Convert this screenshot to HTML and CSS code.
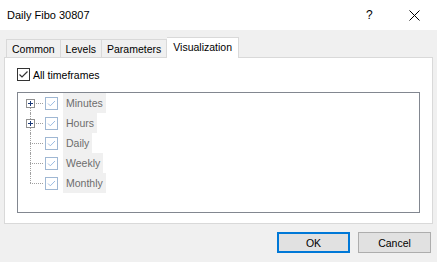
FILE: index.html
```html
<!DOCTYPE html>
<html lang="en">
  <head>
    <meta charset="UTF-8" />
    <meta name="viewport" content="width=device-width, initial-scale=1.0" />
    <title>Daily Fibo 30807</title>
    <link rel="stylesheet" href="styles.css">
  </head>
  <body>
    <div class="dialog">
      <div class="titlebar">
        <span class="title">Daily Fibo 30807</span>
        <span class="help">?</span>
        <span class="close">
          <svg width="11" height="11" viewBox="0 0 11 11"><path d="M0.5 0.5 L10.5 10.5 M10.5 0.5 L0.5 10.5" stroke="#000" stroke-width="1" fill="none"/></svg>
        </span>
      </div>

      <div class="content">
        <div class="tabs">
          <div class="tab">Common</div>
          <div class="tab">Levels</div>
          <div class="tab">Parameters</div>
          <div class="tab active">Visualization</div>
        </div>

        <div class="panel">
          <label class="check">
            <span class="box">
              <svg width="11" height="11" viewBox="0 0 11 11"><path d="M1.5 5.5 L4 8 L9.5 2.5" stroke="#333" stroke-width="1.2" fill="none"/></svg>
            </span>
            All timeframes
          </label>

          <div class="tree">
            <div class="node first">
              <span class="twig"><span class="plus"></span></span>
              <span class="cb"><svg width="11" height="11" viewBox="0 0 11 11"><path d="M2 5.5 L4.3 7.8 L9 3" stroke="#9dbde3" stroke-width="1" fill="none"/></svg></span>
              <span class="label">Minutes</span>
            </div>
            <div class="node">
              <span class="twig"><span class="plus"></span></span>
              <span class="cb"><svg width="11" height="11" viewBox="0 0 11 11"><path d="M2 5.5 L4.3 7.8 L9 3" stroke="#9dbde3" stroke-width="1" fill="none"/></svg></span>
              <span class="label">Hours</span>
            </div>
            <div class="node">
              <span class="twig"></span>
              <span class="cb"><svg width="11" height="11" viewBox="0 0 11 11"><path d="M2 5.5 L4.3 7.8 L9 3" stroke="#9dbde3" stroke-width="1" fill="none"/></svg></span>
              <span class="label">Daily</span>
            </div>
            <div class="node">
              <span class="twig"></span>
              <span class="cb"><svg width="11" height="11" viewBox="0 0 11 11"><path d="M2 5.5 L4.3 7.8 L9 3" stroke="#9dbde3" stroke-width="1" fill="none"/></svg></span>
              <span class="label">Weekly</span>
            </div>
            <div class="node last">
              <span class="twig"></span>
              <span class="cb"><svg width="11" height="11" viewBox="0 0 11 11"><path d="M2 5.5 L4.3 7.8 L9 3" stroke="#9dbde3" stroke-width="1" fill="none"/></svg></span>
              <span class="label">Monthly</span>
            </div>
          </div>
        </div>

        <div class="buttons">
          <button class="btn default">OK</button>
          <button class="btn">Cancel</button>
        </div>
      </div>
    </div>
  </body>
</html>
```

FILE: styles.css
```css
html,
body {
  margin: 0;
  padding: 0;
}
body {
  width: 437px;
  height: 262px;
  overflow: hidden;
  font-family: "Liberation Sans", Arial, sans-serif;
  font-size: 10.5px;
  color: #000;
}
.dialog {
  display: flex;
  flex-direction: column;
  height: 262px;
  background-color: #f0f0f0;
}

/* title bar */
.titlebar {
  display: flex;
  align-items: center;
  height: 30px;
  background-color: #fff;
  padding-left: 7px;
}
.title {
  flex: 1;
  font-size: 11px;
}
.help {
  width: 12px;
  font-size: 12px;
  margin-right: 31px;
}
.close {
  display: flex;
  width: 11px;
  margin-right: 17px;
}

/* tabs */
.content {
  padding: 7px 4px 0 4px;
}
.tabs {
  display: flex;
  align-items: flex-end;
  padding-left: 2px;
  height: 20px;
  position: relative;
  z-index: 1;
}
.tab {
  height: 17px;
  line-height: 18px;
  padding: 0 5px;
  border: 1px solid #d9d9d9;
  border-bottom: none;
  border-left: none;
  background-color: #f0f0f0;
}
.tab:first-child {
  border-left: 1px solid #d9d9d9;
}
.tab.active {
  height: 20px;
  line-height: 18px;
  padding: 0 6px;
  background-color: #fff;
  border-left: none;
  margin-bottom: -1px;
}
.panel {
  height: 165px;
  background-color: #fff;
  border: 1px solid #d9d9d9;
  padding: 0 12px;
}

/* check box */
.check {
  display: flex;
  align-items: center;
  margin-top: 10px;
  height: 13px;
}
.box {
  display: flex;
  align-items: center;
  justify-content: center;
  width: 11px;
  height: 11px;
  border: 1px solid #333;
  margin-right: 3px;
}

/* tree */
.tree {
  margin-top: 11px;
  height: 119px;
  border: 1px solid #828790;
}
.node {
  display: flex;
  align-items: center;
  height: 20px;
}
.twig {
  position: relative;
  width: 25px;
  height: 20px;
  margin-right: 2px;
}
.twig::before {
  content: "";
  position: absolute;
  left: 12px;
  top: 0;
  bottom: 0;
  border-left: 1px dotted #a0a0a0;
}
.first .twig::before {
  top: 10px;
}
.last .twig::before {
  bottom: 10px;
}
.twig::after {
  content: "";
  position: absolute;
  left: 12px;
  width: 13px;
  top: 10px;
  border-top: 1px dotted #a0a0a0;
}
.plus {
  position: absolute;
  left: 8px;
  top: 6px;
  width: 7px;
  height: 7px;
  border: 1px solid #919191;
  background-color: #fff;
  z-index: 1;
}
.plus::before,
.plus::after {
  content: "";
  position: absolute;
  background-color: #1c3a78;
}
.plus::before {
  left: 1px;
  top: 3px;
  width: 5px;
  height: 1px;
}
.plus::after {
  left: 3px;
  top: 1px;
  width: 1px;
  height: 5px;
}
.cb {
  display: flex;
  align-items: center;
  justify-content: center;
  width: 11px;
  height: 11px;
  border: 1px solid #9fb7d3;
  background-color: #fff;
  margin-right: 5px;
}
.label {
  height: 20px;
  line-height: 20px;
  padding: 0 3px;
  background-color: #f0f0f0;
  color: #6d6d6d;
}

/* buttons */
.buttons {
  display: flex;
  justify-content: flex-end;
  gap: 8px;
  padding: 8px 2px 0 0;
}
.btn {
  width: 73px;
  height: 21px;
  font-family: inherit;
  font-size: 10.5px;
  background-color: #e1e1e1;
  border: 1px solid #adadad;
  padding: 0;
}
.btn.default {
  border: 2px solid #0078d7;
}
```
